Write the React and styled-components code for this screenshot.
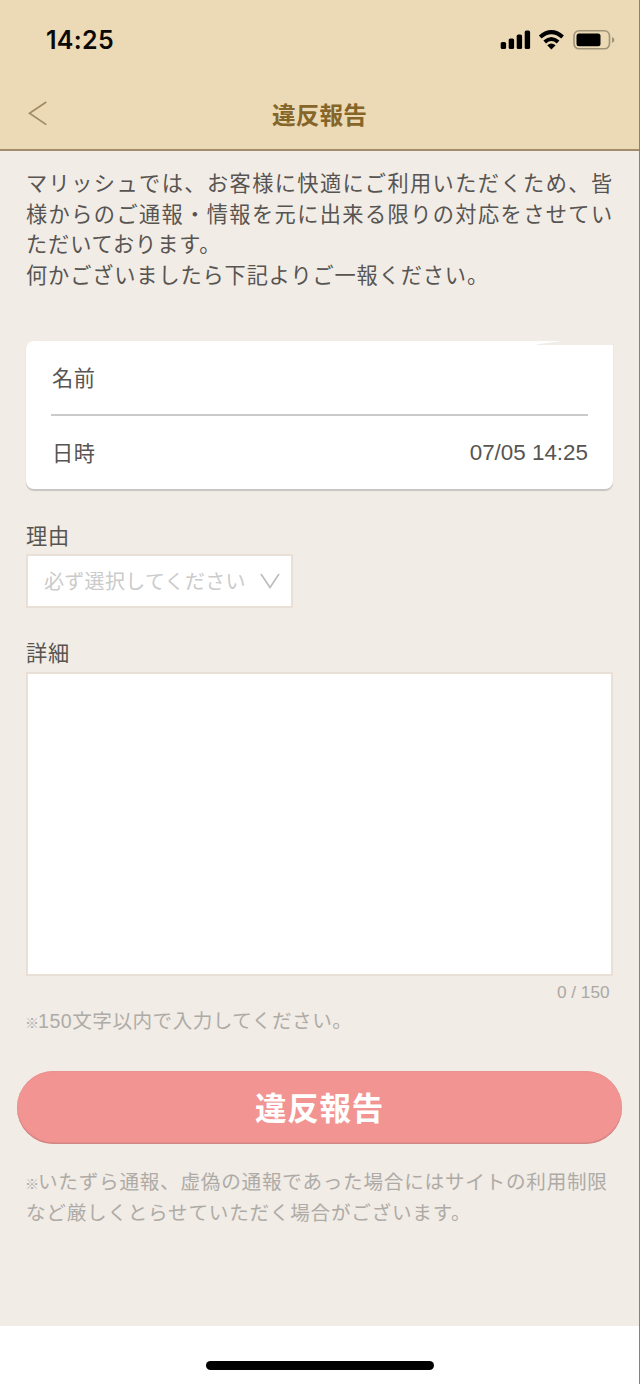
import React from 'react';
import styled, { createGlobalStyle } from 'styled-components';

const GlobalStyle = createGlobalStyle`
  * { box-sizing: border-box; }
  body {
    margin: 0;
    background: #fff;
    font-family: "Liberation Sans", "Noto Sans CJK JP", sans-serif;
    color: #575451;
  }
`;

const Screen = styled.div`
  width: 640px;
  height: 1384px;
  display: flex;
  flex-direction: column;
  border-right: 1px solid #85817c;
  background: #f1ece6;
  overflow: hidden;
`;

const Header = styled.header`
  flex: none;
  height: 151px;
  display: flex;
  flex-direction: column;
  background: #ecdab7;
  border-bottom: 2px solid #a38c69;
`;

const StatusBar = styled.div`
  height: 79px;
  padding: 0 24px 0 46px;
  display: flex;
  align-items: center;
  justify-content: space-between;
`;

const Clock = styled.time`
  font: 600 25px/30px Inter, sans-serif;
  letter-spacing: 0.3px;
  color: #0b0906;
`;

const NavBar = styled.nav`
  height: 70px;
  padding: 0 28px;
  display: grid;
  grid-template-columns: 22px 1fr 22px;
  align-items: center;
`;

const Title = styled.h1`
  margin: 0;
  text-align: center;
  font: 700 23.7px/32px "Noto Sans CJK JP", sans-serif;
  color: #856528;
`;

const BackButton = styled.button`
  width: 20px;
  height: 26px;
  padding: 0;
  border: 0;
  background: none;
  display: flex;
`;

const Content = styled.main`
  flex: 1;
  padding: 18px 26px 0;
  display: flex;
  flex-direction: column;
`;

const Intro = styled.p`
  margin: 0;
  font-size: 21.2px;
  line-height: 30.6px;
  letter-spacing: 0.88px;
  text-align: justify;
`;

const Card = styled.section`
  position: relative;
  margin-top: 50px;
  height: 148px;
  padding: 0 25px;
  background: #fff;
  border-radius: 8px 0 8px 8px;
  box-shadow: 0 1.5px 1px #c6c5c2;
`;

const CardNotch = styled.svg`
  position: absolute;
  top: -1px;
  right: 0;
`;

const Row = styled.div`
  height: ${(p) => p.$height}px;
  padding: 0 0 2px 1px;
  display: flex;
  align-items: center;
  justify-content: space-between;
  font-size: 21.2px;
  letter-spacing: 0.6px;
  border-bottom: ${(p) => (p.$divided ? '2px solid #cacaca' : '0')};
`;

const DateValue = styled.span`
  padding-top: 2px;
  font-size: 22.4px;
  letter-spacing: 0;
`;

const Label = styled.label`
  margin-top: ${(p) => p.$gap}px;
  height: 30px;
  font-size: 21.2px;
  line-height: 30px;
  letter-spacing: 0.7px;
`;

const Select = styled.button`
  margin-top: 2px;
  width: 267px;
  height: 54px;
  padding: 0 11px 0 16px;
  display: flex;
  align-items: center;
  justify-content: space-between;
  background: #fff;
  border: 2px solid #e8e0d6;
  font: 20px/28px "Noto Sans CJK JP", sans-serif;
  letter-spacing: 0.3px;
  color: #cbcbcb;
  white-space: nowrap;
`;

const TextArea = styled.textarea`
  margin-top: 3px;
  height: 304px;
  border: 2px solid #e8e0d6;
  border-radius: 0;
  resize: none;
  background: #fff;
`;

const Counter = styled.div`
  padding: 1px 3.5px 0 0;
  height: 30px;
  text-align: right;
  font-size: 17.2px;
  line-height: 30px;
  color: #aaa8a5;
`;

const Note = styled.p`
  margin: ${(p) => p.$top}px 0 0;
  font-size: 19.6px;
  line-height: 30.6px;
  letter-spacing: ${(p) => p.$spacing}px;
  color: #aeaba7;
  white-space: nowrap;
`;

const Mark = styled.span`
  margin-left: -1px;
  margin-right: -1px;
  font-size: 14px;
  line-height: 1;
  letter-spacing: 0;
  font-weight: 700;
  font-family: "Noto Sans CJK JP", sans-serif;
`;

const SubmitButton = styled.button`
  flex: none;
  margin: 34.5px -9px 0 -9px;
  height: 73px;
  padding: 0 0 3px;
  border: 0;
  border-radius: 37px;
  background: #f29492;
  box-shadow: inset 0 -1.5px 1px #cf8583, inset 0 1px 1px #e8928f;
  color: #fff;
  font: 700 31.5px/40px "Noto Sans CJK JP", sans-serif;
  letter-spacing: 0.8px;
`;

const HomeArea = styled.footer`
  flex: none;
  height: 58px;
  padding: 35px 0 0 206px;
  background: #fff;
`;

const HomeIndicator = styled.div`
  width: 228px;
  height: 9px;
  border-radius: 5px;
  background: #000;
`;

function StatusIcons() {
  return (
    <svg width="115" height="24" viewBox="0 0 115 24">
      <rect x="0.7" y="14" width="5.4" height="7" rx="1.6" />
      <rect x="8.7" y="10.5" width="5.4" height="10.5" rx="1.6" />
      <rect x="16.7" y="6.5" width="5.4" height="14.5" rx="1.6" />
      <rect x="24.7" y="2.5" width="5.4" height="18.5" rx="1.6" />
      <g fill="none" stroke="#000" strokeWidth="4">
        <path d="M40.2 8.9Q51.4 -0.7 62.6 8.9" />
        <path d="M44.7 14Q51.4 8 58.1 14" />
      </g>
      <path d="M47.2 17.2Q51.4 13.8 55.6 17.2L51.4 21.4Z" />
      <rect x="74" y="2.8" width="35.5" height="18" rx="5" fill="none" stroke="#a0937a" strokeWidth="1.6" />
      <rect x="76.5" y="5.5" width="24" height="12.8" rx="2.5" />
      <path d="M112 9Q114.4 10 114.4 12T112 15Z" fill="#a0937a" />
    </svg>
  );
}

export default function App() {
  return (
    <>
      <GlobalStyle />
      <Screen>
        <Header>
          <StatusBar>
            <Clock>14:25</Clock>
            <StatusIcons />
          </StatusBar>
          <NavBar>
            <BackButton aria-label="戻る">
              <svg width="20" height="26" viewBox="0 0 20 26" fill="none" stroke="#a08a62" strokeWidth="1.7">
                <path d="M18.3 1L1.5 12.3L18.3 23.6" />
              </svg>
            </BackButton>
            <Title>違反報告</Title>
          </NavBar>
        </Header>
        <Content>
          <Intro>
            マリッシュでは、お客様に快適にご利用いただくため、皆様からのご通報・情報を元に出来る限りの対応をさせていただいております。<br />
            何かございましたら下記よりご一報ください。
          </Intro>
          <Card>
            <CardNotch width="80" height="5" viewBox="0 0 80 5" fill="#f1ece6">
              <path d="M2 5Q10 3 26 1.5V0H80V5Z" />
            </CardNotch>
            <Row $height={75} $divided>名前</Row>
            <Row $height={73}>
              日時<DateValue>07/05 14:25</DateValue>
            </Row>
          </Card>
          <Label $gap={33}>理由</Label>
          <Select>
            必ず選択してください
            <svg width="20" height="16" viewBox="0 0 20 16" fill="none" stroke="#bcbcbc" strokeWidth="1.6">
              <path d="M1 1L10 14.5L19 1" />
            </svg>
          </Select>
          <Label $gap={31}>詳細</Label>
          <TextArea />
          <Counter>0 / 150</Counter>
          <Note $top={-0.5} $spacing={0.5}><Mark>※</Mark>150文字以内で入力してください。</Note>
          <SubmitButton>違反報告</SubmitButton>
          <Note $top={23.5} $spacing={0.76}>
            <Mark>※</Mark>いたずら通報、虚偽の通報であった場合にはサイトの利用制限<br />
            など厳しくとらせていただく場合がございます。
          </Note>
        </Content>
        <HomeArea><HomeIndicator /></HomeArea>
      </Screen>
    </>
  );
}
